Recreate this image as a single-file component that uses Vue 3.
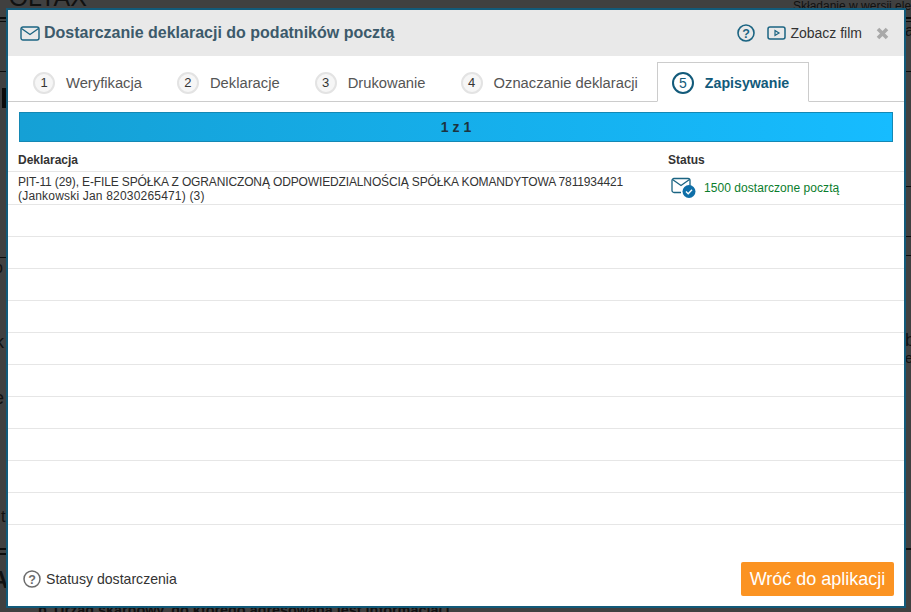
<script setup>
const steps = [
  { nr: 1, label: 'Weryfikacja' },
  { nr: 2, label: 'Deklaracje' },
  { nr: 3, label: 'Drukowanie' },
  { nr: 4, label: 'Oznaczanie deklaracji' },
]

// puste wiersze pod jedyną deklaracją
const emptyRows = 10

// strzępy strony widoczne pod nakładką
const scraps = [
  { text: 'POLTAX', x: -8, y: -17, size: 25 },
  { text: 'Składanie w wersji ele', x: 793, y: -1, size: 12 },
  { text: 'b.', x: 38, y: 602, size: 14.4, bold: true },
  { text: 'Urząd skarbowy, do którego adresowana jest informacja(1', x: 54, y: 602, size: 14.4, bold: true },
  { text: 'b', x: 905, y: 330, size: 18 },
  { text: 'a', x: 905, y: 22, size: 16 },
  { text: 'k', x: -5, y: 332, size: 18 },
  { text: 'o', x: -6, y: 259, size: 16 },
  { text: 'e', x: -6, y: 388, size: 18 },
  { text: 't', x: 1, y: 508, size: 16 },
  { text: 'e', x: 905, y: 350, size: 14 },
  { text: 'A', x: -9, y: 566, size: 24, bold: true },
]

const marks = [
  { x: 0, y: 17, w: 6, h: 2 },
  { x: 0, y: 21, w: 6, h: 1 },
  { x: 0, y: 71, w: 6, h: 1 },
  { x: 2, y: 88, w: 4, h: 20 },
  { x: 0, y: 257, w: 6, h: 1 },
  { x: 0, y: 548, w: 6, h: 2 },
  { x: 0, y: 553, w: 6, h: 2 },
  { x: 906, y: 17, w: 5, h: 2 },
  { x: 906, y: 21, w: 5, h: 1 },
  { x: 906, y: 71, w: 5, h: 1 },
  { x: 906, y: 186, w: 5, h: 1 },
  { x: 906, y: 236, w: 5, h: 1 },
  { x: 906, y: 255, w: 5, h: 1 },
  { x: 906, y: 548, w: 5, h: 2 },
]
</script>

<template>
  <div class="page">
    <div class="backdrop">
      <span
        v-for="s in scraps"
        :key="s.text"
        class="scrap"
        :class="{ bold: s.bold }"
        :style="{ left: s.x + 'px', top: s.y + 'px', fontSize: s.size + 'px' }"
      >{{ s.text }}</span>
      <i
        v-for="(m, i) in marks"
        :key="i"
        class="mark"
        :style="{ left: m.x + 'px', top: m.y + 'px', width: m.w + 'px', height: m.h + 'px' }"
      ></i>
    </div>

    <div class="modal">
      <header class="head">
        <svg class="mail" width="20" height="15" viewBox="0 0 20 15" fill="none" stroke="#1b6482" stroke-width="1.4">
          <rect x="1" y="1" width="18" height="13" rx="2" />
          <path d="M1.5 2.500 10 8.500l8.500-6" />
        </svg>
        <h1>Dostarczanie deklaracji do podatników pocztą</h1>
        <div class="head-right">
          <svg class="help" width="18" height="18" viewBox="0 0 18 18">
            <circle cx="9" cy="9" r="8" fill="none" stroke="#1b6482" stroke-width="1.600" />
            <text x="9" y="13.500" text-anchor="middle" class="help-mark" fill="#1b6482">?</text>
          </svg>
          <svg class="film" width="19" height="14" viewBox="0 0 19 14" fill="none" stroke="#1b6482" stroke-width="1.5">
            <path d="M3 1h13a2 2 0 0 1 2 2v8a2 2 0 0 1-2 2H3a2 2 0 0 1-2-2V3a2 2 0 0 1 2-2Z" />
            <path d="M8 4.500 12 7l-4 2.500Z" stroke-width="1.200" />
          </svg>
          <span class="film-label">Zobacz film</span>
          <svg class="close" width="13" height="13" viewBox="0 0 13 13">
            <path d="M2 2l9 9M11 2l-9 9" stroke="#a9a9a9" stroke-width="3.600" />
          </svg>
        </div>
      </header>

      <nav class="tabs">
        <div v-for="s in steps" :key="s.nr" class="tab">
          <span class="nr">{{ s.nr }}</span>
          <span>{{ s.label }}</span>
        </div>
        <div class="tab active">
          <span class="nr">5</span>
          <span>Zapisywanie</span>
        </div>
      </nav>

      <div class="progress">1 z 1</div>

      <div class="row row-head">
        <div class="col-a">Deklaracja</div>
        <div class="col-b">Status</div>
      </div>
      <div class="row row-item">
        <div class="col-a">
          <span class="line-upper">PIT-11 (29), E-FILE SPÓŁKA Z OGRANICZONĄ ODPOWIEDZIALNOŚCIĄ SPÓŁKA KOMANDYTOWA 7811934421</span>
          <span class="line-lower">(Jankowski Jan 82030265471) (3)</span>
        </div>
        <div class="col-b status">
          <svg width="26" height="22" viewBox="0 0 26 22" fill="none">
            <path d="M3 1.500h14a2 2 0 0 1 2 2V9M10 15.500H3a2 2 0 0 1-2-2v-10a2 2 0 0 1 2-2" stroke="#1b6482" stroke-width="1.300" />
            <path d="M1.500 2.500 10 8.500l8.500-6" stroke="#1b6482" stroke-width="1.300" />
            <circle cx="18" cy="14.500" r="6.500" fill="#0f6fa8" />
            <path d="M15 14.500l2.200 2.200 3.800-4" stroke="#fff" stroke-width="1.400" />
          </svg>
          <span>1500 dostarczone pocztą</span>
        </div>
      </div>
      <div v-for="n in emptyRows" :key="n" class="row row-empty"></div>

      <footer class="foot">
        <div class="legend">
          <svg width="18" height="18" viewBox="0 0 18 18">
            <circle cx="9" cy="9" r="8" fill="none" stroke="#6b6b6b" stroke-width="1.500" />
            <text x="9" y="13.500" text-anchor="middle" class="help-mark" fill="#6b6b6b">?</text>
          </svg>
          <span>Statusy dostarczenia</span>
        </div>
        <button class="back">Wróć do aplikacji</button>
      </footer>
    </div>
  </div>
</template>

<style>
body {
  margin: 0;
  background: #404040;
}
</style>

<style scoped>
.page {
  position: relative;
  width: 911px;
  height: 612px;
  overflow: hidden;
  box-sizing: border-box;
  padding: 8px 0 0 6px;
  background: #404040;
  font-family: "Liberation Sans", Arial, sans-serif;
  color: #333;
}

.backdrop {
  position: absolute;
  inset: 0;
}

.scrap {
  position: absolute;
  white-space: nowrap;
  color: #111;
}

.scrap.bold {
  font-weight: bold;
}

.mark {
  position: absolute;
  background: #0c0c0c;
}

.modal {
  position: relative;
  box-sizing: border-box;
  width: 900px;
  height: 600px;
  border: 2px solid #125a7a;
  background: #fff;
  display: flex;
  flex-direction: column;
}

.head {
  height: 46px;
  flex: none;
  background: #e9e9e9;
  display: flex;
  align-items: center;
  padding: 0 15px 0 12px;
}

.mail {
  margin-right: 4px;
}

.head h1 {
  margin: 0;
  font-size: 16px;
  font-weight: bold;
  color: #3c5a6b;
}

.head-right {
  margin-left: auto;
  display: flex;
  align-items: center;
  font-size: 14px;
  color: #333;
}

.help-mark {
  font-family: "Liberation Sans", Arial, sans-serif;
  font-size: 12.500px;
  font-weight: bold;
}

.film {
  margin-left: 12px;
  margin-right: 4px;
}

.close {
  margin-left: 14px;
}

.tabs {
  height: 46px;
  flex: none;
  box-sizing: border-box;
  border-bottom: 1px solid #ccc;
  display: flex;
  align-items: flex-end;
  padding-left: 8px;
}

.tab {
  height: 39px;
  box-sizing: border-box;
  display: flex;
  align-items: center;
  padding: 2px 18px 0 17px;
  font-size: 14.75px;
  color: #555;
}

.nr {
  width: 18px;
  height: 18px;
  border: 2px solid #e3e3e3;
  border-radius: 50%;
  background: #f6f6f6;
  display: flex;
  align-items: center;
  justify-content: center;
  font-size: 13px;
  font-weight: normal;
  color: #333;
  margin-right: 11px;
}

.tab.active {
  height: 40px;
  margin-left: 1px;
  margin-bottom: -1px;
  border: 1px solid #ccc;
  border-bottom: 1px solid #fff;
  background: #fff;
  font-size: 14.2px;
  font-weight: bold;
  color: #125a7a;
  padding: 2px 19px 0 14px;
}

.tab.active .nr {
  border-color: #125a7a;
  background: #fff;
  color: #125a7a;
  font-size: 14px;
}

.progress {
  margin: 10px 11px 0;
  height: 30px;
  flex: none;
  box-sizing: border-box;
  border: 1px solid #1488b4;
  background: linear-gradient(to right, #15a0d5, #16bcff);
  display: flex;
  align-items: center;
  justify-content: center;
  font-size: 14px;
  font-weight: bold;
  color: #1c3340;
}

.row {
  flex: none;
  display: flex;
  box-sizing: border-box;
  border-bottom: 1px solid #e6e6e6;
  font-size: 12px;
  line-height: 14px;
  color: #333;
}

.col-a {
  width: 640px;
  flex: none;
  padding-left: 10px;
}

.col-b {
  padding-left: 10px;
}

.line-upper,
.line-lower {
  display: block;
  white-space: nowrap;
}

.line-upper {
  letter-spacing: -0.135px;
}

.line-lower {
  letter-spacing: 0.19px;
}

.row-head {
  height: 30px;
  align-items: flex-end;
  padding-bottom: 4px;
  font-weight: bold;
}

.row-item {
  height: 33px;
  align-items: center;
  padding-top: 2px;
}

.row-empty {
  height: 32px;
}

.status {
  display: flex;
  align-items: center;
  gap: 7px;
  color: #0a7d2c;
  margin-left: 3px;
  margin-top: -2px;
  letter-spacing: 0.05px;
}

.foot {
  flex: 1;
  display: flex;
  justify-content: space-between;
  align-items: flex-end;
  padding: 0 10px 10px 15px;
}

.legend {
  display: flex;
  align-items: center;
  gap: 5px;
  font-size: 14.1px;
  margin-bottom: 8px;
}

.back {
  width: 153px;
  height: 34px;
  border: none;
  border-radius: 2px;
  background: #fb9322;
  color: #fff;
  font-family: inherit;
  font-size: 18px;
  padding: 0;
}
</style>
